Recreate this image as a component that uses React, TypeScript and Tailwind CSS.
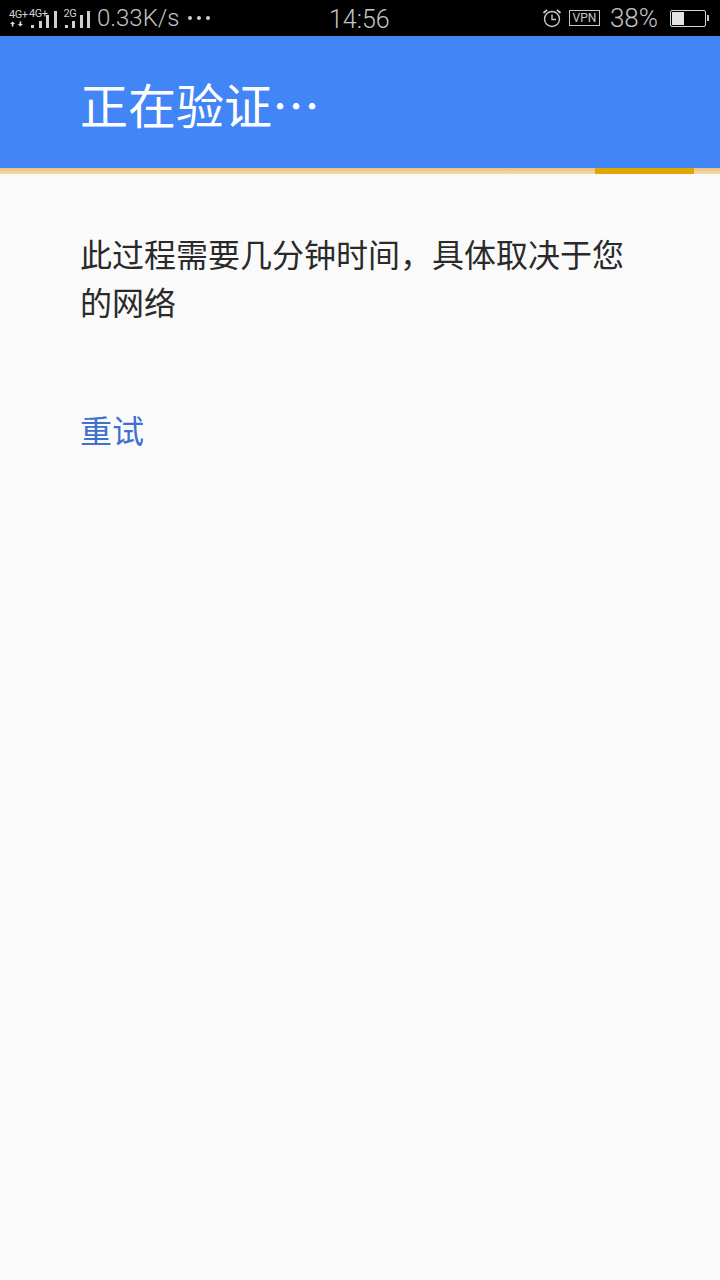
const cjk = "font-['Noto_Sans_CJK_SC','Noto_Sans',sans-serif]";

function Signal({ bars }: { bars: number[] }) {
  return (
    <div className="flex items-end gap-[4.5px] h-[18px]">
      {bars.map((h, i) => (
        <div key={i} className="w-[3px] bg-[#d0d0d0]" style={{ height: h }} />
      ))}
    </div>
  );
}

function StatusBar() {
  return (
    <div className="h-9 bg-black flex items-center text-[#c4c4c4] font-['Roboto',sans-serif] relative">
      <div className="w-[20px] ml-[9px] flex flex-col gap-[1px] text-[11px] tracking-[-0.5px] leading-[11px] text-[#d0d0d0] -mt-[1px]">
        <span>4G+</span>
        <svg width="13" height="6" viewBox="0 0 15 6" fill="#ddd" className="ml-[1px]">
          <path d="M3 0l3 3H4v3H2V3H0zM12 6l3-3h-2V0h-2v3H9z" />
        </svg>
      </div>
      <div className="relative pl-[2px] mt-[1px]">
        <span className="absolute left-0 -top-[1px] text-[11px] tracking-[-0.5px] leading-[10px] text-[#d0d0d0]">4G+</span>
        <Signal bars={[3, 7, 13, 17]} />
      </div>
      <div className="relative ml-[8px] mt-[1px]">
        <span className="absolute -left-[1px] -top-[1px] text-[11px] tracking-[-0.5px] leading-[10px] text-[#d0d0d0]">2G</span>
        <Signal bars={[3, 7, 13, 17]} />
      </div>
      <span className="ml-[7px] text-[24px] leading-none font-light">0.33K/s</span>
      <div className="ml-[8px] flex gap-[5px]">
        <div className="w-1 h-1 rounded-full bg-[#d0d0d0]" />
        <div className="w-1 h-1 rounded-full bg-[#d0d0d0]" />
        <div className="w-1 h-1 rounded-full bg-[#d0d0d0]" />
      </div>
      <span className="absolute left-[329px] top-[6px] text-[25px] leading-[28px] font-light">14:56</span>
      <div className="ml-auto flex items-center">
        <svg width="20" height="20" viewBox="0 0 20 20" fill="none" stroke="#c8c8c8" strokeWidth="1.4">
          <circle cx="10" cy="11" r="7.5" />
          <path d="M10 6.5V11.5H14" />
          <path d="M1.5 5L5 1.8M18.5 5L15 1.8" strokeWidth="1.8" />
        </svg>
        <div className="ml-[7px] w-[31px] h-4 border border-[#c8c8c8] text-[12px] leading-[14px] text-center text-[#c8c8c8]">VPN</div>
        <span className="ml-[10px] text-[26px] leading-none font-light">38%</span>
        <div className="ml-[12px] w-[36px] h-[17px] border border-[#d8d8d8] rounded-[2px] p-[1px]">
          <div className="w-[12px] h-full bg-[#e4e4e4]" />
        </div>
        <div className="ml-[1px] mr-[11px] w-[2px] h-[6px] bg-[#c8c8c8]" />
      </div>
    </div>
  );
}

export default function App() {
  return (
    <div className={`w-[720px] h-[1280px] bg-[#fafafa] flex flex-col overflow-hidden ${cjk}`}>
      <StatusBar />
      <div className="h-[132px] bg-[#4285f6] pl-[80px] flex items-center">
        <h1 className="text-[48px] leading-none font-normal text-white mt-[1px]">正在验证⋯</h1>
      </div>
      <div className="h-[6px] bg-gradient-to-b from-[#e8c27a] to-[#f3dcae] flex">
        <div className="ml-[595px] w-[99px] bg-[#e0a600]" />
      </div>
      <div className="pl-[80px] pr-[90px] pt-[55px]">
        <p className="text-[32px] leading-[48px] font-normal text-[#2a2a2a]">此过程需要几分钟时间，具体取决于您的网络</p>
        <button className="block mt-[80px] text-[32px] leading-[48px] font-normal text-[#3f6fd0]">重试</button>
      </div>
    </div>
  );
}
